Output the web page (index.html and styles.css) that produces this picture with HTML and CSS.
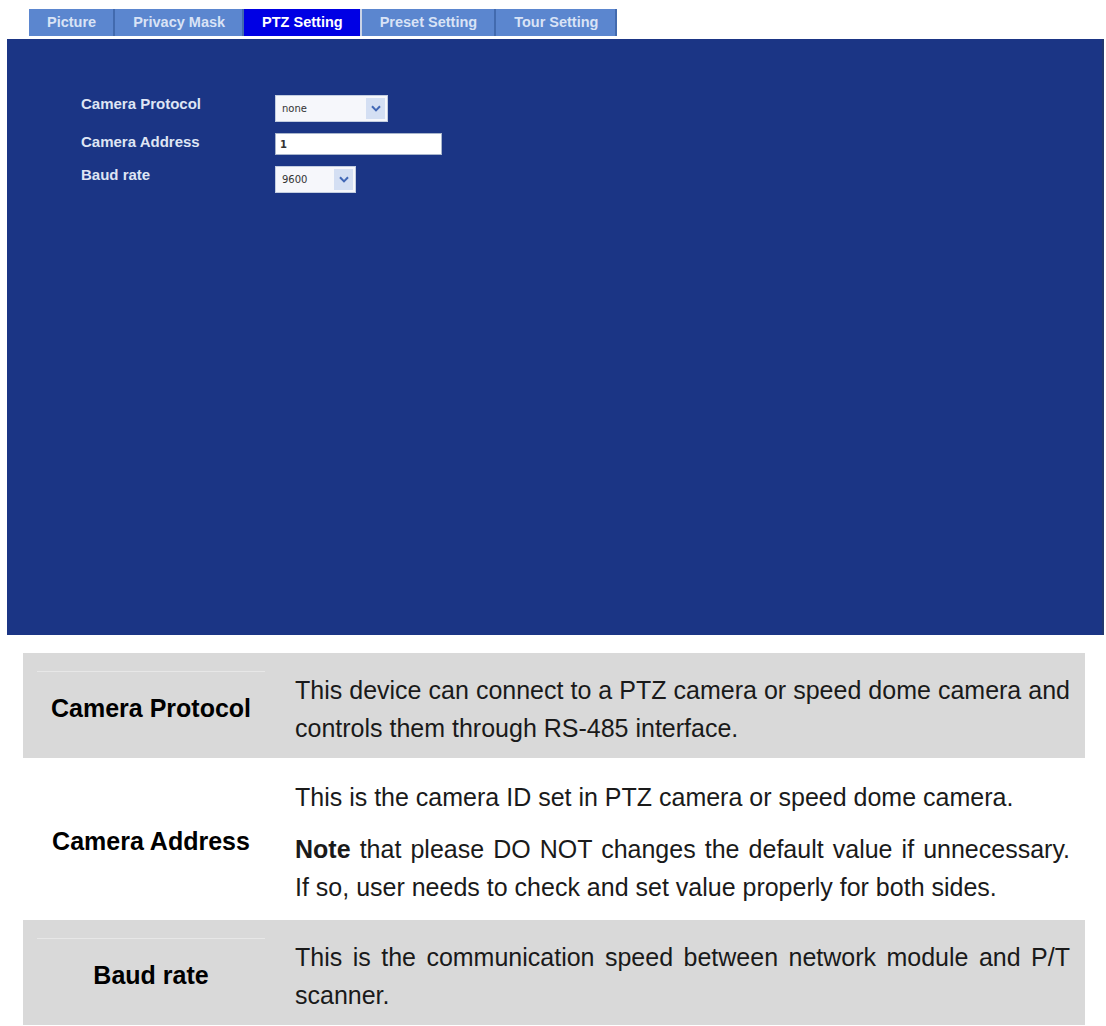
FILE: index.html
```html
<!DOCTYPE html>
<html lang="en">
<head>
    <meta charset="UTF-8">
    <meta name="viewport" content="width=device-width, initial-scale=1.0">
    <title>PTZ Setting</title>
    <link rel="stylesheet" href="styles.css">
</head>
<body>
    <!-- tab bar -->
    <div class="tabs">
        <a class="tab">Picture</a>
        <a class="tab">Privacy Mask</a>
        <a class="tab active">PTZ Setting</a>
        <a class="tab">Preset Setting</a>
        <a class="tab">Tour Setting</a>
    </div>

    <!-- settings panel -->
    <div class="panel">
        <form class="ptz-form">
            <label for="protocol">Camera Protocol</label>
            <div class="combo combo-wide">
                <select id="protocol"><option>none</option></select>
                <span class="drop"><svg width="10" height="7" viewBox="0 0 10 7"><path d="M1 1.2 L5 5.4 L9 1.2" fill="none" stroke="#4167b5" stroke-width="2"/></svg></span>
            </div>

            <label for="address">Camera Address</label>
            <input type="text" id="address" value="1">

            <label for="baud">Baud rate</label>
            <div class="combo combo-narrow">
                <select id="baud"><option>9600</option></select>
                <span class="drop"><svg width="10" height="7" viewBox="0 0 10 7"><path d="M1 1.2 L5 5.4 L9 1.2" fill="none" stroke="#4167b5" stroke-width="2"/></svg></span>
            </div>
        </form>
    </div>

    <!-- description table -->
    <div class="help">
        <div class="row shaded">
            <div class="term"><span>Camera Protocol</span></div>
            <div class="desc">
                <p>This device can connect to a PTZ camera or speed dome camera and controls them through RS-485 interface.</p>
            </div>
        </div>
        <div class="row row-tall">
            <div class="term"><span>Camera Address</span></div>
            <div class="desc">
                <p>This is the camera ID set in PTZ camera or speed dome camera.</p>
                <p><b>Note</b> that please DO NOT changes the default value if unnecessary. If&nbsp;so, user needs to check and set value properly for both sides.</p>
            </div>
        </div>
        <div class="row shaded">
            <div class="term"><span>Baud rate</span></div>
            <div class="desc">
                <p>This is the communication speed between network module and P/T scanner.</p>
            </div>
        </div>
    </div>
</body>
</html>
```

FILE: styles.css
```css
body {
    margin: 0;
    background-color: #fff;
    font-family: "Liberation Sans", Arial, sans-serif;
    color: #1a1a1a;
}

/* tabs */
.tabs {
    display: flex;
    margin: 9px 0 3px 29px;
    height: 27px;
}
.tab {
    padding: 0 17px 0 18px;
    line-height: 27px;
    font-size: 14.5px;
    font-weight: bold;
    color: #d9e3f6;
    background-color: #5b86cf;
    border-right: 2px solid #426aae;
    cursor: pointer;
}
.tab.active {
    background-color: #0000e4;
    color: #fff;
    border-right-color: #c9d3e6;
}

/* blue panel */
.panel {
    box-sizing: border-box;
    margin-left: 7px;
    width: 1097px;
    height: 596px;
    padding: 56px 0 0 74px;
    background-color: #1b3585;
    border-right: 2px solid #22386f;
}
.ptz-form {
    display: grid;
    grid-template-columns: 194px auto;
    row-gap: 11px;
    align-items: start;
    justify-items: start;
}
.ptz-form label {
    font-size: 15px;
    font-weight: bold;
    line-height: 18px;
    color: #dfe5f4;
}
.combo {
    display: flex;
    box-sizing: border-box;
    height: 27px;
    border: 1px solid #c3cde0;
    background-color: #f6f7fb;
}
.combo-wide {
    width: 113px;
}
.combo-narrow {
    width: 81px;
}
.combo select {
    flex: 1;
    min-width: 0;
    appearance: none;
    -webkit-appearance: none;
    border: none;
    background: transparent;
    padding: 0 0 0 6px;
    font-family: "DejaVu Sans", sans-serif;
    font-size: 10px;
    color: #333;
}
.drop {
    display: flex;
    align-items: center;
    justify-content: center;
    width: 19px;
    margin: 2px;
    background-color: #d4dff3;
}
.ptz-form input[type="text"] {
    box-sizing: border-box;
    width: 167px;
    height: 22px;
    padding: 0 4px;
    border: 1px solid #a8b5cc;
    background-color: #fff;
    font-family: "DejaVu Sans", sans-serif;
    font-size: 10px;
    font-weight: bold;
    color: #333;
}

/* description table */
.help {
    width: 1062px;
    margin: 18px 0 0 23px;
}
.row {
    display: grid;
    grid-template-columns: 256px 1fr;
}
.row.shaded {
    background-color: #d9d9d9;
}
.term {
    display: flex;
    flex-direction: column;
    padding: 18px 14px 14px;
    font-size: 25px;
    font-weight: bold;
    color: #000;
}
.shaded .term::before {
    content: "";
    border-top: 1px solid #e7e7e7;
}
.term span {
    flex: 1;
    display: flex;
    align-items: center;
    justify-content: center;
}
.desc {
    padding: 18px 15px 11px 16px;
    font-size: 25px;
    line-height: 38px;
    text-align: justify;
}
.row-tall .desc {
    padding-top: 20px;
    padding-bottom: 14px;
}
.desc p {
    margin: 0;
}
.desc p + p {
    margin-top: 14px;
}
```
